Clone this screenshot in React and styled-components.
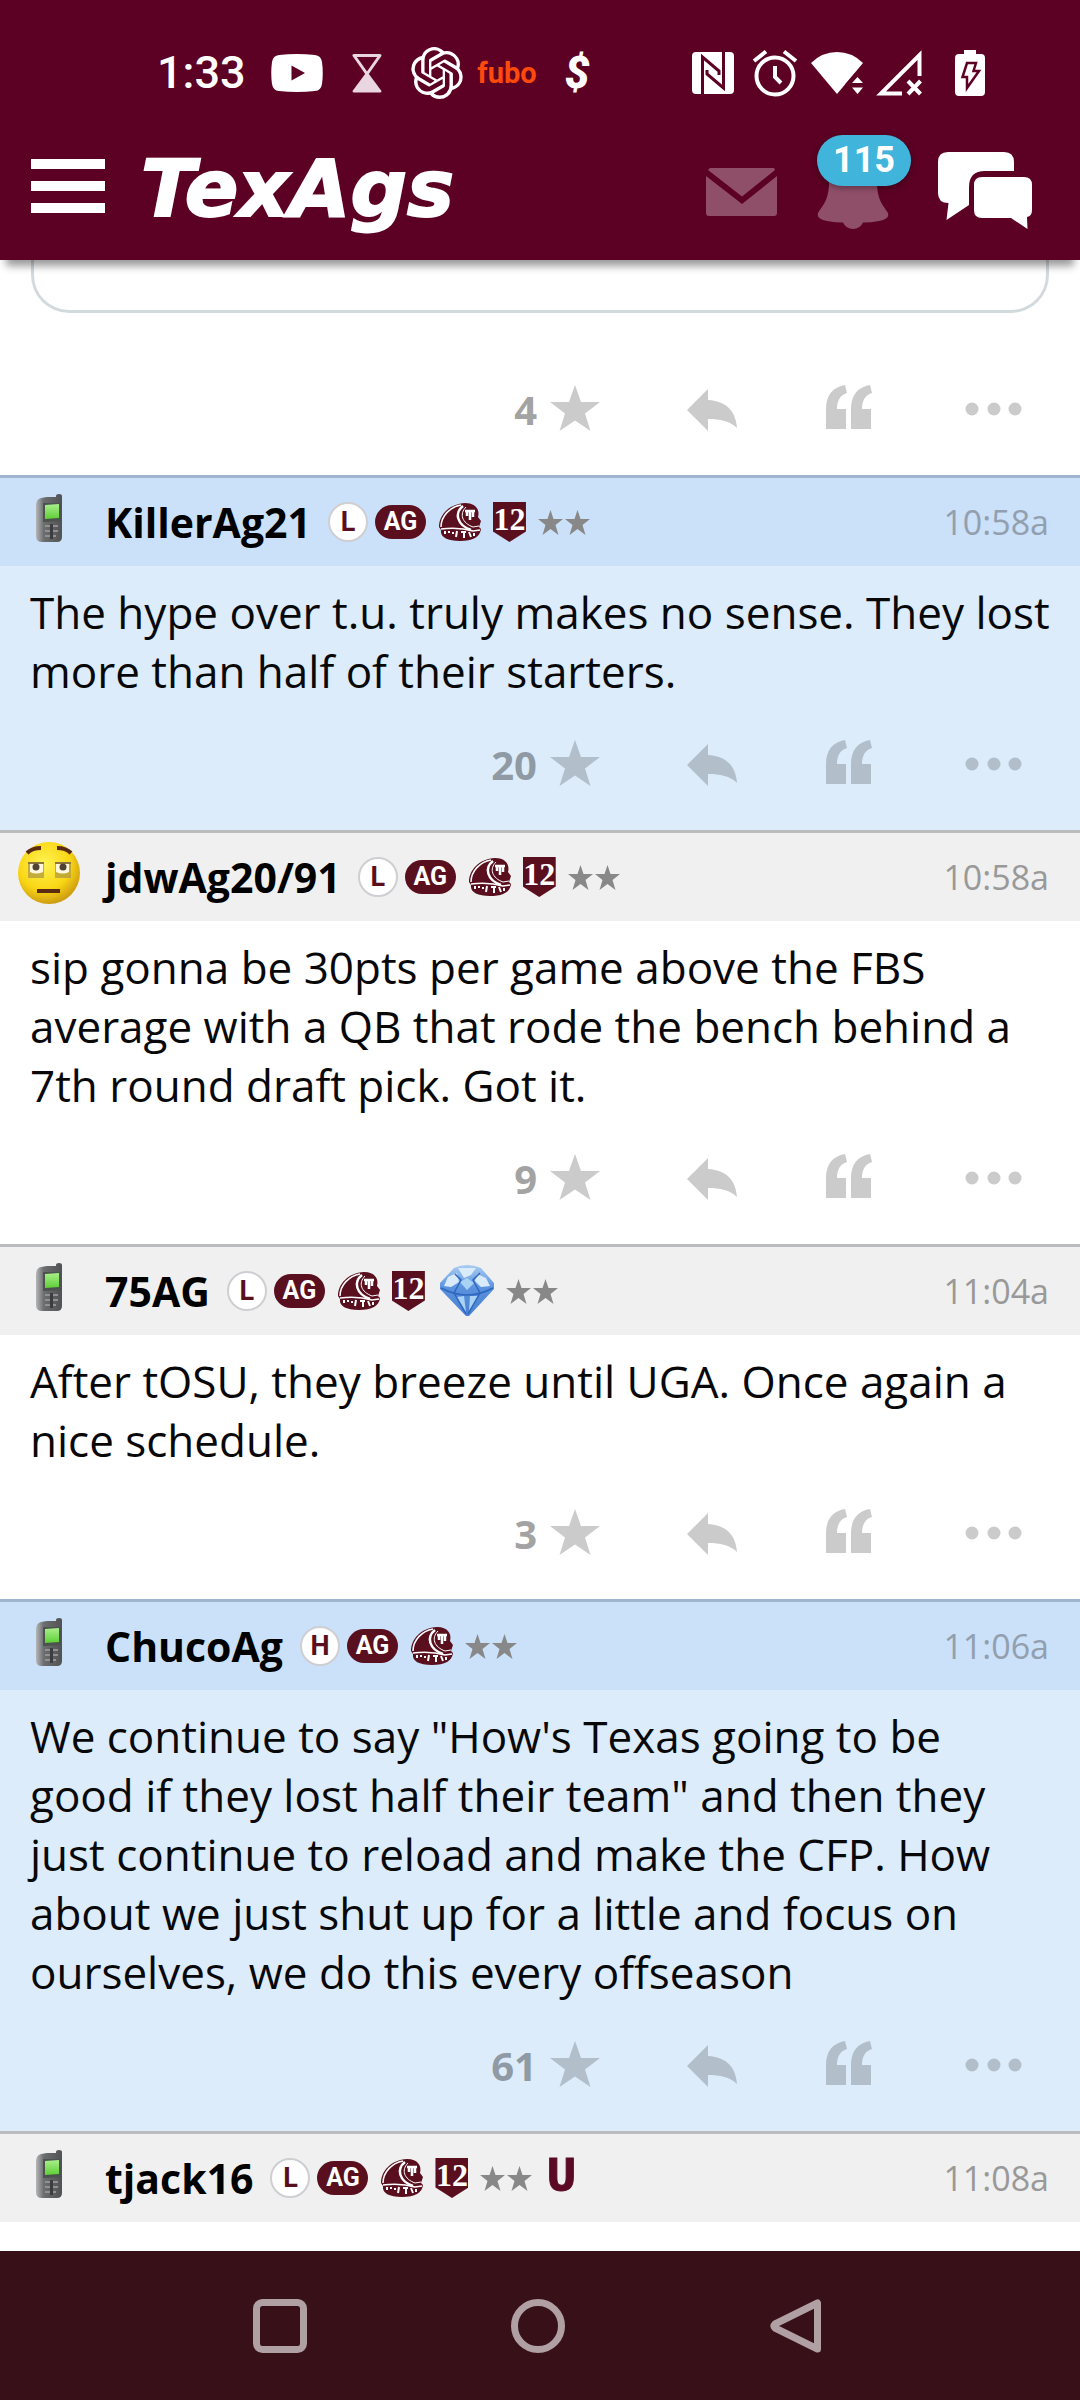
import React from "react";
import styled, { createGlobalStyle } from "styled-components";
import { SiOpenai } from "react-icons/si";

const Global = createGlobalStyle`
  * { box-sizing: border-box; }
  body { margin: 0; background: #fff; }
  button { border: 0; padding: 0; background: none; font: inherit; color: inherit; cursor: pointer; }
  svg { display: block; flex: none; }
`;

const Page = styled.div`
  min-height: 100vh;
  display: flex;
  flex-direction: column;
  background: #fff;
  color: #080808;
  font-family: "Open Sans", "Noto Sans", sans-serif;
`;

/* ---------- header ---------- */

const Header = styled.header`
  background: #5c0024;
  color: #fff;
  z-index: 1;
  box-shadow: 0 12px 8px -6px rgba(0, 0, 0, 0.4);
`;

const StatusBar = styled.div`
  display: flex;
  justify-content: space-between;
  align-items: center;
  height: 112px;
  padding: 34px 75px 0 157px;
  font-family: Roboto, sans-serif;
`;

const StatusGroup = styled.div`
  display: flex;
  align-items: center;
  gap: ${(p) => p.$gap}px;
`;

const Clock = styled.time`
  width: 96px;
  font-size: 45px;
  line-height: 52px;
  font-weight: 500;
`;

const Slot = styled.span`
  display: flex;
  justify-content: center;
  align-items: center;
  width: ${(p) => p.$width || 52}px;
  height: 56px;
`;

const Fubo = styled.span`
  color: #ff4a0c;
  font: bold 29px/56px Roboto, sans-serif;
`;

const Dollar = styled.span`
  font: italic 900 44px/56px Roboto, sans-serif;
`;

const Toolbar = styled.div`
  display: flex;
  align-items: center;
  height: 148px;
  padding: 0 48px 0 31px;
`;

const MenuButton = styled.button`
  display: flex;
  flex-direction: column;
  gap: 12px;
  width: 74px;
  margin-right: 36px;
`;

const MenuLine = styled.span`
  height: 10px;
  background: #fff;
`;

const Logo = styled.a`
  margin-right: auto;
  padding-top: 6px;
  color: #fff;
  text-decoration: none;
  font: italic bold 79px/80px "DejaVu Sans", sans-serif;
  -webkit-text-stroke: 2px #fff;
`;

const Tools = styled.nav`
  display: flex;
  align-items: center;
  gap: 39px;
`;

const ToolButton = styled.button`
  position: relative;
`;

const Count = styled.span`
  position: absolute;
  left: 0;
  top: -4px;
  width: 94px;
  height: 51px;
  border-radius: 26px;
  background: #40b4da;
  box-shadow: 0 2px 6px rgba(0, 0, 0, 0.35);
  color: #fff;
  font: bold 36px/50px Roboto, sans-serif;
`;

/* ---------- thread ---------- */

const Feed = styled.main`
  flex: 1;
`;

const QuoteBox = styled.div`
  height: 53px;
  margin: 0 31px 33px;
  border: 3px solid #d2dade;
  border-top: 0;
  border-radius: 0 0 38px 38px;
`;

const Post = styled.article`
  border-top: 3px solid ${(p) => (p.$blue ? "#9fb4cf" : "#bbbcbe")};
  background: ${(p) => (p.$blue ? "#dcecfb" : "#fff")};
`;

const PostHead = styled.header`
  display: flex;
  align-items: center;
  height: 88px;
  padding-right: 31px;
  background: ${(p) => (p.$blue ? "#cbe0f9" : "#f0f0f0")};
`;

const Avatar = styled.span`
  display: flex;
  justify-content: center;
  width: 105px;
  padding: 0 8px 8px 0;
`;

const User = styled.a`
  margin-right: 17px;
  color: #000;
  text-decoration: none;
  font-size: 41px;
  line-height: 58px;
  font-weight: 700;
`;

const Stamp = styled.time`
  margin-left: auto;
  color: ${(p) => (p.$blue ? "#929fae" : "#999")};
  font-size: 34px;
  line-height: 48px;
`;

const Flairs = styled.div`
  display: flex;
  align-items: center;
  gap: 12px;
`;

const Tags = styled.span`
  display: flex;
  align-items: center;
  gap: 7px;
`;

const Tier = styled.span`
  width: 40px;
  height: 40px;
  border: 2px solid #cfcfd3;
  border-radius: 50%;
  background: #fff;
  color: #5a0f1e;
  text-align: center;
  font: bold 27px/37px Roboto, sans-serif;
`;

const AgPill = styled.span`
  width: 51px;
  height: 34px;
  border-radius: 17px;
  background: #5a0f1e;
  color: #fff;
  text-align: center;
  font: bold 25px/34px Roboto, sans-serif;
`;

const Shield = styled.span`
  display: flex;
  justify-content: center;
  width: 33px;
  height: 40px;
  background: #5a0f1e;
  clip-path: polygon(0 0, 100% 0, 100% 74%, 50% 100%, 0 74%);
  color: #fff;
  font: bold 32px/34px "Liberation Serif", serif;
`;

const BlockU = styled.span`
  color: #5a0a24;
  font: bold 50px/48px "Liberation Mono", monospace;
  -webkit-text-stroke: 1px #5a0a24;
`;

const Text = styled.p`
  margin: 0;
  padding: 17px 24px 0 30px;
  font-size: 44px;
  line-height: 59px;
`;

const Actions = styled.div`
  display: flex;
  justify-content: flex-end;
  align-items: center;
  gap: 81px;
  height: 129px;
  padding-right: 58px;
  color: ${(p) => (p.$blue ? "#b2bfcb" : "#cbcbcb")};
`;

const ActionButton = styled.button`
  display: flex;
  align-items: center;
  gap: 10px;
`;

const Stars = styled.span`
  color: ${(p) => (p.$blue ? "#8f9aa5" : "#a3a3a3")};
  font-size: 40px;
  line-height: 54px;
  padding-bottom: 2px;
  font-weight: 700;
`;

/* ---------- system navigation ---------- */

const SystemNav = styled.footer`
  display: flex;
  justify-content: center;
  align-items: center;
  gap: 204px;
  height: 149px;
  padding-right: 5px;
  background: #371018;
`;

/* ---------- drawings ---------- */

const YouTubeIcon = () => (
  <svg width="52" height="38" viewBox="0 0 52 38">
    <path fill="#fff" fillRule="evenodd" d="M8 1Q26-1 44 1Q50 1.500 51 8Q52.500 19 51 30Q50 36.500 44 37Q26 39 8 37Q2 36.500 1 30Q-.5 19 1 8Q2 1.500 8 1ZM20.500 11.500V26.500L34 19Z" />
  </svg>
);

const HourglassIcon = () => (
  <svg width="30" height="40" viewBox="0 0 30 40">
    <path fill="none" stroke="#ead6e0" strokeWidth="3" strokeLinejoin="round" d="M2 2.500H28L15 21Z" />
    <path fill="#ead6e0" d="M15 18.500L29.500 38Q29.500 39.500 28 39.500H2Q.5 39.500 .5 38Z" />
  </svg>
);

const NfcIcon = () => (
  <svg width="44" height="44" viewBox="0 0 44 44">
    <rect x="1" y="1" width="42" height="42" rx="4" fill="#fff" />
    <path fill="none" stroke="#5c0024" strokeWidth="3" d="M11.500 44V6L28 20V24M32.500 0V37L16 23V19" />
  </svg>
);

const AlarmIcon = () => (
  <svg width="46" height="48" viewBox="0 0 46 48" fill="none" stroke="#fff" strokeWidth="4">
    <circle cx="23" cy="27" r="18.500" />
    <path d="M2 12L14 2.500M44 12L32 2.500M23 17V28L29 34" />
  </svg>
);

const WifiIcon = () => (
  <svg width="52" height="44" viewBox="0 0 52 44" fill="#fff">
    <path d="M0 12Q11 1 26 1T52 12L26 43Z" />
    <path d="M34 33.500L44 22H52V44H34Z" fill="#5c0024" />
    <path d="M41 32L46.500 26L52 32ZM41 36.500H52L46.500 43Z" />
  </svg>
);

const SignalIcon = () => (
  <svg width="46" height="46" viewBox="0 0 46 46" fill="none" stroke="#fff" strokeWidth="4">
    <path d="M26 43.500H5L43.500 5V26M32 31L44.500 44M44.500 31L32 44" />
  </svg>
);

const BatteryIcon = () => (
  <svg width="30" height="46" viewBox="0 0 30 46">
    <path fill="#fff" d="M9 0H21V4H26Q30 4 30 8V42Q30 46 26 46H4Q0 46 0 42V8Q0 4 4 4H9Z" />
    <path fill="none" stroke="#5c0024" strokeWidth="2.500" d="M12 13H21L18.500 21H24L12 38V27H7.500Z" />
  </svg>
);

const MailIcon = () => (
  <svg width="72" height="94" viewBox="0 0 72 94" fill="#904f69">
    <path d="M4 29H68L69 31L36 57.500L2 31Z" />
    <path d="M0 37L36 65L71 37V74Q71 77 68 77H3Q0 77 0 74Z" />
  </svg>
);

const BellIcon = () => (
  <svg width="72" height="94" viewBox="0 0 72 94" fill="#904f69">
    <path d="M36 22C54 22 60 32 60 46C61 62 66 66 71 74Q73 80 62 82Q54 83.500 46 83.500Q43 90 36 90T26 83.500Q18 83.500 10 82Q-1 80 1 74C6 66 11 62 12 46C12 32 18 22 36 22Z" />
  </svg>
);

const ChatIcon = () => (
  <svg width="104" height="94" viewBox="0 0 104 94" fill="#fff">
    <path d="M20 13H76Q86 13 86 23V32H57Q41 32 41 48V66L18.500 81L20.500 64Q10 64 10 54V23Q10 13 20 13Z" />
    <path d="M54 38H96Q104 38 104 46V71Q104 77 99 78L99.500 90L83 79H54Q46 79 46 71V46Q46 38 54 38Z" />
  </svg>
);

const StarIcon = () => (
  <svg width="56" height="56" viewBox="0 0 56 56" fill="currentColor">
    <path d="M28 2L34 19H53L38 30.500L43.500 48L28 37.500L12.500 48L18 30.500L3 19H22Z" />
  </svg>
);

const ReplyIcon = () => (
  <svg width="56" height="56" viewBox="0 0 56 56" fill="currentColor">
    <path d="M3 27L24 6V17C44 18 52 30 53 45C46 38 36 36 24 36V48Z" />
  </svg>
);

const QuoteIcon = () => (
  <svg width="56" height="56" viewBox="0 0 56 56" fill="currentColor">
    <path d="M5 46V26C5 12 12 4 24 2L26 10C19 12 16 18 16 26H25V46Z" />
    <path d="M30 46V26C30 12 37 4 49 2L51 10C44 12 41 18 41 26H50V46Z" />
  </svg>
);

const MoreIcon = () => (
  <svg width="64" height="56" viewBox="0 0 64 56" fill="currentColor">
    <circle cx="14" cy="26" r="6.500" />
    <circle cx="36" cy="26" r="6.500" />
    <circle cx="57" cy="26" r="6.500" />
  </svg>
);

const PhoneIcon = () => (
  <svg width="30" height="50" viewBox="0 0 30 50">
    <defs>
      <linearGradient id="shell">
        <stop offset="0" stopColor="#b4b6b8" />
        <stop offset=".3" stopColor="#6b6d6f" />
        <stop offset="1" stopColor="#505254" />
      </linearGradient>
      <linearGradient id="screen" x2="0" y2="1">
        <stop offset="0" stopColor="#a8ef8c" />
        <stop offset="1" stopColor="#5ed035" />
      </linearGradient>
    </defs>
    <path fill="url(#shell)" d="M22 3Q22 1 25 1T28 3V44Q28 49 23 49H8Q2 49 2 43V13Q2 6 7 5L13 4H22Z" />
    <path fill="#4c524d" d="M9 10H27V28L9 29Z" />
    <path fill="url(#screen)" d="M11 12L25 11V25L11 26Z" />
    <path stroke="#8f9193" strokeWidth="2" fill="none" d="M11 33H24M11 38H24M11 43H22" />
    <path fill="#3b3d3f" d="M16 31H19V46H16Z" />
  </svg>
);

const EmojiIcon = () => (
  <svg width="64" height="66" viewBox="0 0 64 66">
    <defs>
      <radialGradient id="face" cx=".42" cy=".35" r=".65">
        <stop offset="0" stopColor="#fff352" />
        <stop offset=".65" stopColor="#f9d614" />
        <stop offset="1" stopColor="#cf9d12" />
      </radialGradient>
    </defs>
    <circle cx="32" cy="33" r="31" fill="url(#face)" />
    <path fill="none" stroke="#5a2a12" strokeWidth="4" d="M10 13Q15 8 24 8M40 8Q49 8 54 13M20 51H43" />
    <rect x="11" y="22" width="16" height="16" fill="#ad9540" opacity=".7" />
    <rect x="38" y="22" width="16" height="16" fill="#ad9540" opacity=".7" />
    <path fill="#fff7dc" d="M13 24H26V32Q19 35 13 32ZM39 24H52V32Q46 35 39 32Z" />
    <path stroke="#8a7440" strokeWidth="2" d="M11 23H27M38 23H54" />
    <circle cx="19" cy="27" r="3.500" fill="#504334" />
    <circle cx="46" cy="27" r="3.500" fill="#504334" />
  </svg>
);

const HelmetIcon = () => (
  <svg width="48" height="38" viewBox="-6 0 48 38">
    <path fill="#5a0f1e" d="M0 24C0 12 10 1 26 0C37 0 41 7 39 14L42 18L40 24L42 26C41 34 34 38 21 38C8 38 1 34 2 27Z" />
    <g fill="none" stroke="#fff">
      <path strokeWidth="1.500" d="M2 24C2 13 11 4 22 2" />
      <path strokeWidth="2.500" d="M24 3C15 10 18 22 32 27" />
      <path strokeWidth="1" d="M27 4C20 11 23 20 34 24L40 23" />
      <path strokeWidth="2.500" d="M26 8H36M28 8V13M31 8V17M34 8V14" />
      <path strokeWidth="1.500" d="M2 26Q20 24 34 28L41 27" />
      <path strokeWidth="2" d="M6 28V31M10 28V30M14 29V31M18 28L17 34M22 29H27M25 30V35M30 29L32 34M35 30V33" />
    </g>
  </svg>
);

const DiamondIcon = () => (
  <svg width="57" height="52" viewBox="-3 0 57 52">
    <defs>
      <linearGradient id="gem" x2="0" y2="1">
        <stop offset="0" stopColor="#a9cdf3" />
        <stop offset=".45" stopColor="#5a92de" />
        <stop offset="1" stopColor="#4a80d2" />
      </linearGradient>
    </defs>
    <path fill="url(#gem)" d="M14 3Q27-3 41 3L54 18V24L29 51H26L0 24V18Z" />
    <path fill="#d9ebfb" d="M18 3L36 3L31 10L24 13ZM8 12L17 8L19 17L11 22L4 21ZM37 9L46 13L50 21L41 22L35 16Z" />
    <path fill="#a8d3f5" d="M20 17L27 13L34 18L27 25ZM17 32L24 31L26 47ZM30 31L38 31L29 46Z" />
    <path fill="none" stroke="#2f66be" strokeWidth="1.500" d="M1 23Q14 30 27 30T53 23M15 9L21 15L14 28L26 49M40 8L33 15L40 28L28 49" />
  </svg>
);

const TwoStarsIcon = () => (
  <svg width="54" height="40" viewBox="0 0 54 40" fill="#888">
    {[0, 27].map((x) => (
      <path key={x} transform={`translate(${x} 8)`} d="M12.500 0L15.500 9H25L17.500 15L20.500 25L12.500 19L4.500 25L7.500 15L0 9H9.500Z" />
    ))}
  </svg>
);

const flairParts = {
  shield: <Shield>12</Shield>,
  diamond: <DiamondIcon />,
  stars: <TwoStarsIcon />,
  u: <BlockU>U</BlockU>,
};

const posts = [
  { user: "KillerAg21", time: "10:58a", blue: true, tier: "L", flair: ["shield", "stars"], likes: 20,
    text: "The hype over t.u. truly makes no sense. They lost more than half of their starters." },
  { user: "jdwAg20/91", time: "10:58a", emoji: true, tier: "L", flair: ["shield", "stars"], likes: 9,
    text: "sip gonna be 30pts per game above the FBS average with a QB that rode the bench behind a 7th round draft pick. Got it." },
  { user: "75AG", time: "11:04a", tier: "L", flair: ["shield", "diamond", "stars"], likes: 3,
    text: "After tOSU, they breeze until UGA. Once again a nice schedule." },
  { user: "ChucoAg", time: "11:06a", blue: true, tier: "H", flair: ["stars"], likes: 61,
    text: "We continue to say \"How's Texas going to be good if they lost half their team\" and then they just continue to reload and make the CFP. How about we just shut up for a little and focus on ourselves, we do this every offseason" },
  { user: "tjack16", time: "11:08a", tier: "L", flair: ["shield", "stars", "u"] },
];

const PostActions = ({ likes, blue }) => (
  <Actions $blue={blue}>
    <ActionButton aria-label={`${likes} stars`}>
      <Stars $blue={blue}>{likes}</Stars>
      <StarIcon />
    </ActionButton>
    <ActionButton aria-label="Reply"><ReplyIcon /></ActionButton>
    <ActionButton aria-label="Quote"><QuoteIcon /></ActionButton>
    <ActionButton aria-label="More"><MoreIcon /></ActionButton>
  </Actions>
);

const ThreadPost = ({ post }) => (
  <Post $blue={post.blue}>
    <PostHead $blue={post.blue}>
      <Avatar>{post.emoji ? <EmojiIcon /> : <PhoneIcon />}</Avatar>
      <User href="#">{post.user}</User>
      <Flairs>
        <Tags>
          <Tier>{post.tier}</Tier>
          <AgPill>AG</AgPill>
          <HelmetIcon />
        </Tags>
        {post.flair.map((name) => (
          <React.Fragment key={name}>{flairParts[name]}</React.Fragment>
        ))}
      </Flairs>
      <Stamp $blue={post.blue}>{post.time}</Stamp>
    </PostHead>
    {post.text && (
      <>
        <Text>{post.text}</Text>
        <PostActions likes={post.likes} blue={post.blue} />
      </>
    )}
  </Post>
);

export default function App() {
  return (
    <Page>
      <Global />
      <Header>
        <StatusBar>
          <StatusGroup $gap={18}>
            <Clock>1:33</Clock>
            <Slot><YouTubeIcon /></Slot>
            <Slot><HourglassIcon /></Slot>
            <Slot><SiOpenai size={52} /></Slot>
            <Slot><Fubo>fubo</Fubo></Slot>
            <Slot><Dollar>$</Dollar></Slot>
          </StatusGroup>
          <StatusGroup $gap={10}>
            <Slot><NfcIcon /></Slot>
            <Slot><AlarmIcon /></Slot>
            <Slot><WifiIcon /></Slot>
            <Slot><SignalIcon /></Slot>
            <Slot $width={70}><BatteryIcon /></Slot>
          </StatusGroup>
        </StatusBar>
        <Toolbar>
          <MenuButton aria-label="Menu">
            <MenuLine />
            <MenuLine />
            <MenuLine />
          </MenuButton>
          <Logo href="#">TexAgs</Logo>
          <Tools>
            <ToolButton aria-label="Mail"><MailIcon /></ToolButton>
            <ToolButton aria-label="Notifications">
              <BellIcon />
              <Count>115</Count>
            </ToolButton>
            <ToolButton aria-label="Forums"><ChatIcon /></ToolButton>
          </Tools>
        </Toolbar>
      </Header>
      <Feed>
        <QuoteBox />
        <PostActions likes={4} />
        {posts.map((post) => (
          <ThreadPost key={post.user} post={post} />
        ))}
      </Feed>
      <SystemNav>
        <button aria-label="Recent apps">
          <svg width="54" height="54" viewBox="0 0 54 54" fill="none" stroke="#b0a0a4" strokeWidth="7">
            <rect x="3.500" y="3.500" width="47" height="47" rx="6" />
          </svg>
        </button>
        <button aria-label="Home">
          <svg width="54" height="54" viewBox="0 0 54 54" fill="none" stroke="#b0a0a4" strokeWidth="7">
            <circle cx="27" cy="27" r="23.500" />
          </svg>
        </button>
        <button aria-label="Back">
          <svg width="54" height="54" viewBox="0 0 54 54" fill="none" stroke="#b0a0a4" strokeWidth="7" strokeLinejoin="round">
            <path d="M48.500 4V50L6 29Q4 27 6 25Z" />
          </svg>
        </button>
      </SystemNav>
    </Page>
  );
}
